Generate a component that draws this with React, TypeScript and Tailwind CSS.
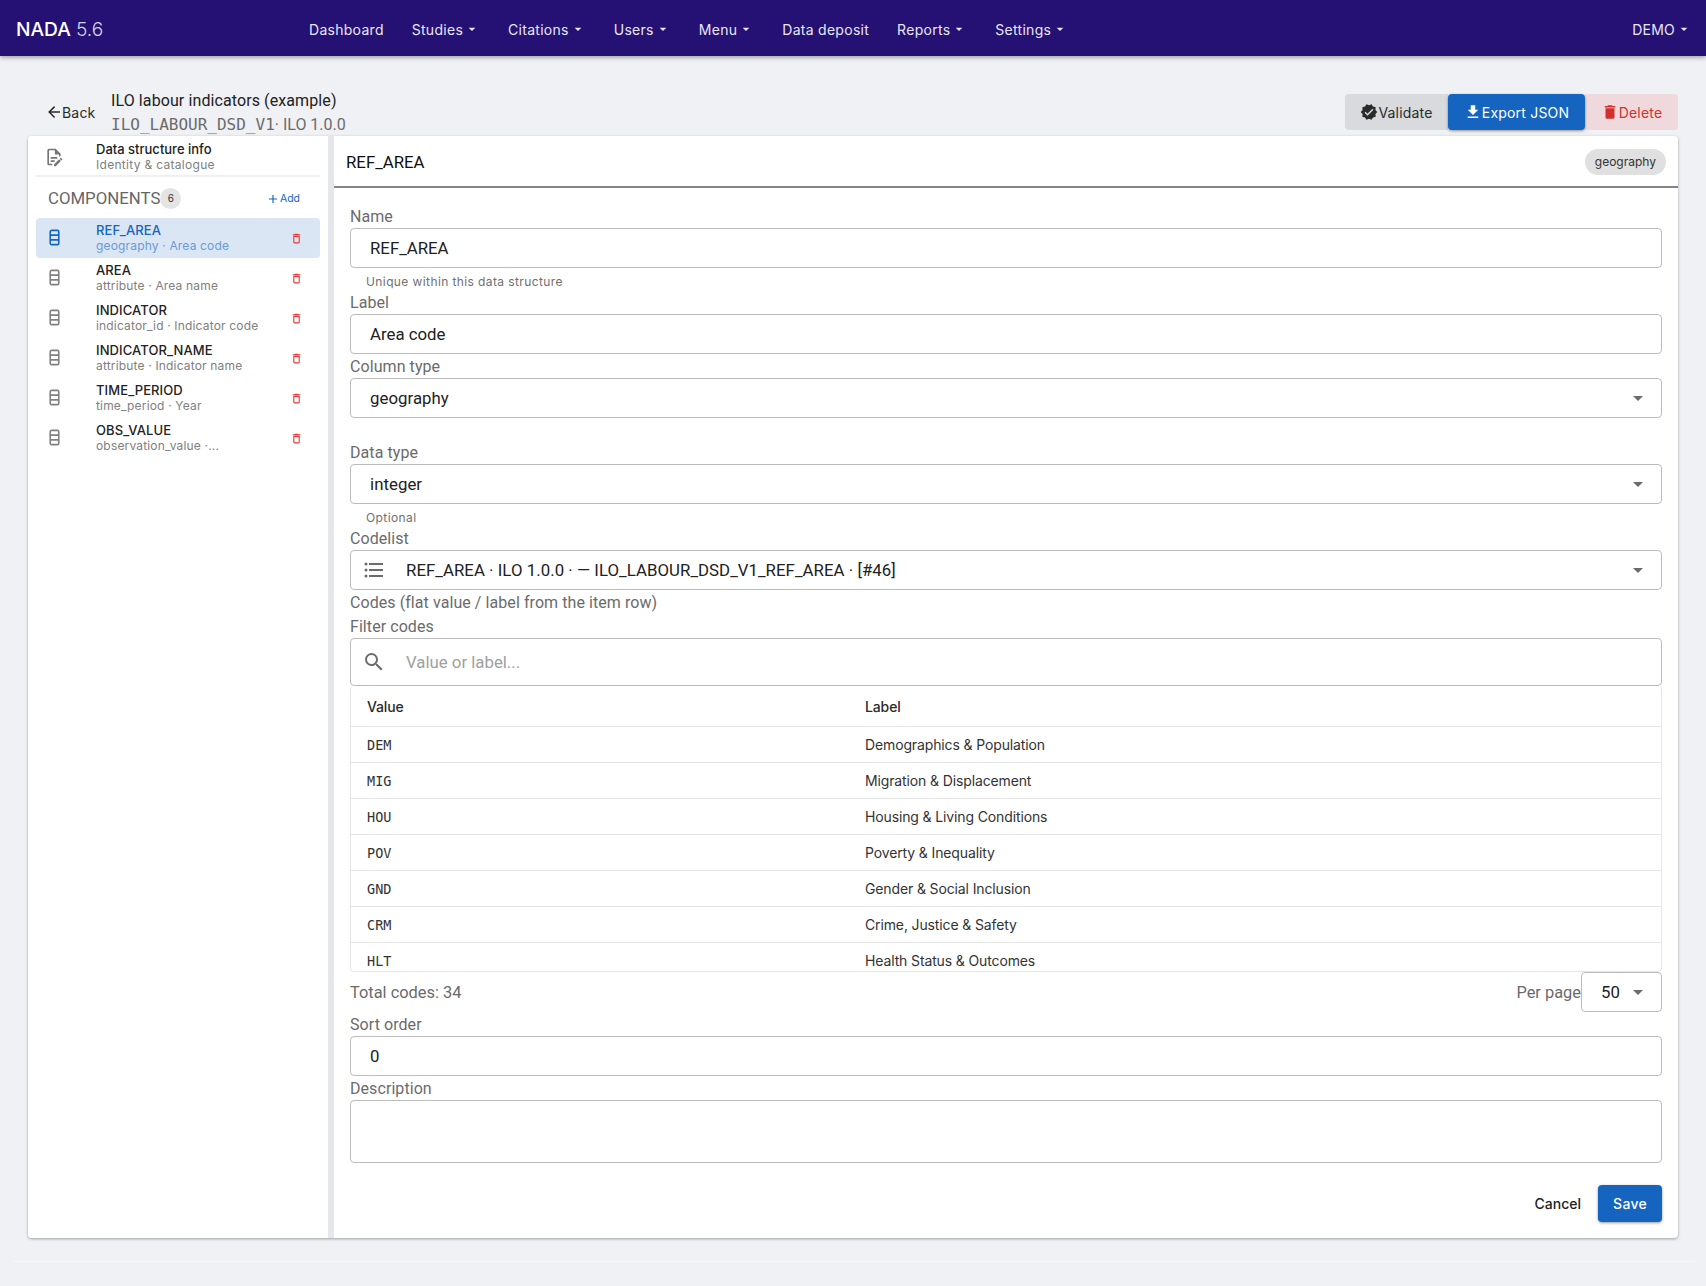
import React from "react";

const P = {
  decagram: "M23,12L20.56,9.22L20.9,5.54L17.29,4.72L15.4,1.54L12,3L8.6,1.54L6.71,4.72L3.1,5.53L3.44,9.21L1,12L3.44,14.78L3.1,18.47L6.71,19.29L8.6,22.47L12,21L15.4,22.46L17.29,19.28L20.9,18.46L20.56,14.78L23,12M10,17L6,13L7.41,11.59L10,14.17L16.59,7.58L18,9L10,17Z",
  download: "M5,20H19V18H5M19,9H15V3H9V9H5L12,16L19,9Z",
  del: "M19,4H15.5L14.5,3H9.5L8.5,4H5V6H19M6,19A2,2 0 0,0 8,21H16A2,2 0 0,0 18,19V7H6V19Z",
  delOut: "M6,19A2,2 0 0,0 8,21H16A2,2 0 0,0 18,19V7H6V19M8,9H16V19H8V9M15.5,4L14.5,3H9.5L8.5,4H5V6H19V4H15.5Z",
  arrow: "M20,11V13H8L13.5,18.5L12.08,19.92L4.16,12L12.08,4.08L13.5,5.5L8,11H20Z",
  search: "M9.5,3A6.5,6.5 0 0,1 16,9.5C16,11.11 15.41,12.59 14.44,13.73L14.71,14H15.5L20.5,19L19,20.5L14,15.5V14.71L13.73,14.44C12.59,15.41 11.11,16 9.5,16A6.5,6.5 0 0,1 3,9.5A6.5,6.5 0 0,1 9.5,3M9.5,5C7,5 5,7 5,9.5C5,12 7,14 9.5,14C12,14 14,12 14,9.5C14,7 12,5 9.5,5Z",
  list: "M7,5H21V7H7V5M7,13V11H21V13H7M4,4.5A1.5,1.5 0 0,1 5.5,6A1.5,1.5 0 0,1 4,7.5A1.5,1.5 0 0,1 2.5,6A1.5,1.5 0 0,1 4,4.5M4,10.5A1.5,1.5 0 0,1 5.5,12A1.5,1.5 0 0,1 4,13.5A1.5,1.5 0 0,1 2.5,12A1.5,1.5 0 0,1 4,10.5M7,19V17H21V19H7M4,16.5A1.5,1.5 0 0,1 5.5,18A1.5,1.5 0 0,1 4,19.5A1.5,1.5 0 0,1 2.5,18A1.5,1.5 0 0,1 4,16.5Z",
  plus: "M19,13H13V19H11V13H5V11H11V5H13V11H19V13Z",
  doc: "M8,12H16V14H8V12M10,20H6V4H13V9H18V12.1L20,10.1V8L14,2H6A2,2 0 0,0 4,4V20A2,2 0 0,0 6,22H10V20M8,18H12.1L13,17.1V16H8V18M20.2,13C20.3,13 20.5,13.1 20.6,13.2L21.9,14.5C22.1,14.7 22.1,15.1 21.9,15.3L20.9,16.3L18.8,14.2L19.8,13.2C19.9,13.1 20,13 20.2,13M20.2,16.9L14.1,23H12V20.9L18.1,14.8L20.2,16.9Z",
  caret: "M7,10L12,15L17,10H7Z",
};

function Mdi({ d, className }: { d: string; className: string }) {
  return (
    <svg viewBox="0 0 24 24" className={className} fill="currentColor" aria-hidden="true">
      <path d={d} />
    </svg>
  );
}

function RowsIcon({ className }: { className: string }) {
  return (
    <svg viewBox="0 0 12 18" className={className} fill="none" stroke="currentColor" strokeWidth="1.7" aria-hidden="true">
      <rect x="1.3" y="1.2" width="9.4" height="15.6" rx="1.6" />
      <path d="M1.3 6.4H10.7M1.3 11.6H10.7" />
    </svg>
  );
}

function NavItem({ label, menu }: { label: string; menu?: boolean }) {
  return (
    <div className="flex items-center h-9 pt-[2px] px-[14px] text-[14px] tracking-[0.28px] text-[#e9e6f5]">
      <span>{label}</span>
      {menu && <Mdi d={P.caret} className="w-4 h-4 ml-[1px] text-[#e9e6f5]" />}
    </div>
  );
}

function Label({ children }: { children: React.ReactNode }) {
  return <div className="h-6 leading-[26px] text-[16px] tracking-[0.07px] text-[#6b6b6b] [font-family:Roboto,sans-serif]">{children}</div>;
}

function Hint({ children }: { children?: React.ReactNode }) {
  return <div className="h-[22px] pl-4 pt-[5px] text-[12px] leading-[18px] tracking-[0.4px] text-[#707070]">{children}</div>;
}

const boxClass = "flex items-center rounded-[4px] border border-[#bcbcbc] bg-white [font-family:Roboto,sans-serif] text-[16.8px] text-[#212121]";

function TextBox({ value }: { value: string }) {
  return <div className={`${boxClass} h-10 pt-[1px] px-[19px]`}>{value}</div>;
}

function SelectBox({ value, icon }: { value: string; icon?: string }) {
  return (
    <div className={`${boxClass} h-10 pr-[11px] ${icon ? "pl-[11px]" : "pl-[19px]"}`}>
      {icon && <Mdi d={icon} className="w-6 h-6 mr-[20px] text-[#6b6b6b]" />}
      <span className="flex-1 pt-[1px] tracking-[0.05px]">{value}</span>
      <Mdi d={P.caret} className="w-6 h-6 text-[#6b6b6b]" />
    </div>
  );
}

const items = [
  ["REF_AREA", "geography · Area code"],
  ["AREA", "attribute · Area name"],
  ["INDICATOR", "indicator_id · Indicator code"],
  ["INDICATOR_NAME", "attribute · Indicator name"],
  ["TIME_PERIOD", "time_period · Year"],
  ["OBS_VALUE", "observation_value ·..."],
];

const codes = [
  ["DEM", "Demographics & Population"],
  ["MIG", "Migration & Displacement"],
  ["HOU", "Housing & Living Conditions"],
  ["POV", "Poverty & Inequality"],
  ["GND", "Gender & Social Inclusion"],
  ["CRM", "Crime, Justice & Safety"],
  ["HLT", "Health Status & Outcomes"],
];

export default function App() {
  return (
    <div className="min-h-[1286px] bg-[#f0f1f5] [font-family:Inter,sans-serif] text-[#212121]">
      <header className="h-14 bg-[#241173] flex items-center shadow-[0_2px_4px_rgba(0,0,0,0.3)] relative">
        <div className="w-[295px] pl-4 pt-[2px] text-[19.2px] text-white font-medium">
          NADA <span className="font-light text-[#d5d2e6]">5.6</span>
        </div>
        <nav className="flex items-center flex-1">
          <NavItem label="Dashboard" />
          <NavItem label="Studies" menu />
          <NavItem label="Citations" menu />
          <NavItem label="Users" menu />
          <NavItem label="Menu" menu />
          <NavItem label="Data deposit" />
          <NavItem label="Reports" menu />
          <NavItem label="Settings" menu />
        </nav>
        <div className="flex items-center pt-[2px] pr-[14px] text-[14px] tracking-[0.25px] text-[#e9e6f5]">
          DEMO
          <Mdi d={P.caret} className="w-4 h-4 ml-[1px]" />
        </div>
      </header>

      <main className="pl-[28px] pr-[28px]">
        <div className="h-20 flex items-end">
          <div className="flex items-center h-[36px] mb-[6px] ml-[17px] w-[66px] text-[14px] tracking-[0.2px] text-[#2a2a2a]">
            <Mdi d={P.arrow} className="w-[18px] h-[18px] -mr-[1px]" />
            Back
          </div>
          <div className="flex-1 [font-family:Roboto,sans-serif] -mb-[1px]">
            <div className="text-[16px] leading-6 tracking-[0.1px] text-[#212121]">ILO labour indicators (example)</div>
            <div className="text-[16px] leading-6 text-[#6b6b6b]">
              <span className="[font-family:'DejaVu_Sans_Mono',monospace]">ILO_LABOUR_DSD_V1</span>· ILO 1.0.0
            </div>
          </div>
          <div className="flex h-9 mb-[6px] text-[14px] tracking-[0.2px]">
            <button className="w-[103px] rounded-l-[4px] bg-[#d9dadd] text-[#2a2a2a] flex items-center justify-center">
              <Mdi d={P.decagram} className="w-[18px] h-[18px]" />
              Validate
            </button>
            <button className="w-[137px] rounded-[4px] bg-[#1565c0] text-white flex items-center justify-center shadow-[0_1px_3px_rgba(0,0,0,0.4)] relative">
              <Mdi d={P.download} className="w-[18px] h-[18px]" />
              Export JSON
            </button>
            <button className="w-[93px] rounded-r-[4px] bg-[#f0d9dc] text-[#d32f2f] flex items-center justify-center">
              <Mdi d={P.del} className="w-[18px] h-[18px]" />
              Delete
            </button>
          </div>
        </div>

        <section className="h-[1102px] flex rounded-[4px] bg-white shadow-[0_1px_3px_rgba(0,0,0,0.35)] overflow-hidden">
          <aside className="w-[300px] shrink-0 bg-white">
            <div className="h-[41px] ml-[8px] mr-[8px] pt-[3px] flex items-center border-b-2 border-[#f0f0f0]">
              <Mdi d={P.doc} className="w-5 h-5 ml-[8px] text-[#757575]" />
              <div className="ml-[32px]">
                <div className="text-[13px] leading-[15px] font-medium text-[#222]">Data structure info</div>
                <div className="text-[12px] leading-[15px] tracking-[0.3px] text-[#808080]">Identity &amp; catalogue</div>
              </div>
            </div>
            <div className="h-[41px] pl-[20px] pr-[28px] pt-[2px] flex items-center">
              <span className="text-[16.8px] text-[#666] [font-family:Roboto,sans-serif]">COMPONENTS</span>
              <span className="w-[21px] h-[21px] rounded-full bg-[#e4e4e4] flex items-center justify-center text-[10px] text-[#333]">6</span>
              <span className="ml-auto flex items-center text-[10.5px] text-[#1565c0]">
                <Mdi d={P.plus} className="w-[14px] h-[14px]" />
                Add
              </span>
            </div>
            <ul className="ml-[8px] mr-[8px]">
              {items.map(([name, sub], i) => (
                <li key={name} className={`h-10 flex items-center rounded-[4px] ${i === 0 ? "bg-[#dbe6f5]" : ""}`}>
                  <RowsIcon className={`ml-[13px] -mt-[2px] w-[11px] h-[17px] ${i === 0 ? "text-[#1565c0]" : "text-[#808080]"}`} />
                  <div className="ml-[36px] flex-1">
                    <div className={`text-[13px] leading-[15px] font-medium tracking-[0.1px] ${i === 0 ? "text-[#1565c0]" : "text-[#222]"}`}>{name}</div>
                    <div className={`text-[12px] leading-[15px] tracking-[0.17px] ${i === 0 ? "text-[#6a9ad6]" : "text-[#808080]"}`}>{sub}</div>
                  </div>
                  <Mdi d={P.delOut} className="w-[13px] h-[13px] mr-[17px] text-[#e53935]" />
                </li>
              ))}
            </ul>
          </aside>
          <div className="w-[6px] shrink-0 bg-[#e6e7ec]" />
          <div className="flex-1 min-w-0">
            <div className="h-[52px] border-b-2 border-[#858585] pl-3 pr-3 flex items-center">
              <span className="text-[16.8px] pt-[3px] text-[#111] [font-family:Roboto,sans-serif] flex-1">REF_AREA</span>
              <span className="h-[26px] mt-[2px] px-[10px] rounded-full bg-[#e0e0e0] flex items-center text-[12px] text-[#333]">geography</span>
            </div>
            <div className="pl-4 pr-4 pt-4">
              <Label>Name</Label>
              <TextBox value="REF_AREA" />
              <Hint>Unique within this data structure</Hint>
              <Label>Label</Label>
              <TextBox value="Area code" />
              <Label>Column type</Label>
              <SelectBox value="geography" />
              <Hint />
              <Label>Data type</Label>
              <SelectBox value="integer" />
              <Hint>Optional</Hint>
              <Label>Codelist</Label>
              <SelectBox value="REF_AREA · ILO 1.0.0 · — ILO_LABOUR_DSD_V1_REF_AREA · [#46]" icon={P.list} />
              <Label>Codes (flat value / label from the item row)</Label>
              <Label>Filter codes</Label>
              <div className={`${boxClass} h-12 pl-[11px] pr-[12px] text-[16.3px]`}>
                <Mdi d={P.search} className="w-6 h-6 mr-[20px] text-[#6b6b6b]" />
                <span className="text-[#a0a0a0] pt-[1px]">Value or label...</span>
              </div>
              <div className="h-[286px] overflow-hidden rounded-[4px] border border-[#e6e6e6] border-t-0">
                <table className="w-full text-[14px] tracking-[-0.13px] text-[#333] border-collapse">
                  <thead>
                    <tr className="h-10 border-b border-[#e6e6e6] text-left">
                      <th className="w-[498px] pl-4 pt-[2px] font-medium text-[#2a2a2a]">Value</th>
                      <th className="pl-4 pt-[2px] font-medium text-[#2a2a2a]">Label</th>
                    </tr>
                  </thead>
                  <tbody>
                    {codes.map(([v, l]) => (
                      <tr key={v} className="h-9 border-b border-[#e6e6e6]">
                        <td className="pl-4 pt-[3px] text-[13.5px] tracking-normal [font-family:'DejaVu_Sans_Mono',monospace]">{v}</td>
                        <td className="pl-4 pt-[1px]">{l}</td>
                      </tr>
                    ))}
                  </tbody>
                </table>
              </div>
              <div className="h-10 flex items-center [font-family:Roboto,sans-serif] text-[16.4px] text-[#6b6b6b]">
                <span className="flex-1 pt-[2px]">Total codes: 34</span>
                <span className="pt-[2px]">Per page</span>
                <div className={`${boxClass} w-[81px] h-10 pl-[19px] pr-[11px]`}>
                  <span className="flex-1 pt-[1px]">50</span>
                  <Mdi d={P.caret} className="w-6 h-6 text-[#6b6b6b]" />
                </div>
              </div>
              <Label>Sort order</Label>
              <TextBox value="0" />
              <Label>Description</Label>
              <div className={`${boxClass} h-[63px]`} />
              <div className="flex items-center justify-end mt-[22px]">
                <span className="mr-[17px] text-[14px] font-medium text-[#222]">Cancel</span>
                <button className="w-16 h-[37px] rounded-[4px] bg-[#1565c0] text-white text-[14px] tracking-[0.25px] font-medium shadow-[0_1px_3px_rgba(0,0,0,0.4)]">Save</button>
              </div>
            </div>
          </div>
        </section>
        <div className="mt-[23px] -mx-[16px] border-t border-[#f6f7f9]" />
      </main>
    </div>
  );
}
